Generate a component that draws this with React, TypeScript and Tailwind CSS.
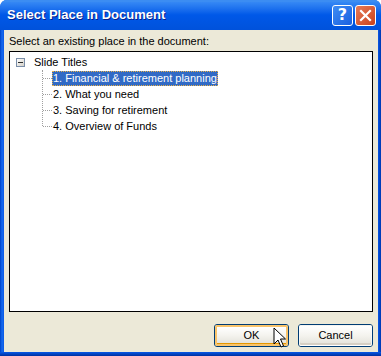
import React from "react";

const tahoma = { fontFamily: '"Liberation Sans", Arial, sans-serif' };

function TreeRow({ label, selected }: { label: string; selected?: boolean }) {
  return (
    <div className="flex h-[16px] items-center">
      <div className="w-[9px] h-0 border-t border-dotted border-[#a0a0a0]" />
      <div
        className={
          selected
            ? "h-[15px] flex items-center px-[1px] bg-[#316ac5] text-white outline-1 outline-dotted outline-[#e8b048] -outline-offset-1"
            : "h-[15px] flex items-center px-[1px] text-black"
        }
      >
        {label}
      </div>
    </div>
  );
}

function XPButton({ label, hot }: { label: string; hot?: boolean }) {
  return (
    <div className="w-[75px] h-[23px] rounded-[3px] border border-[#003c74] p-0">
      <div
        className={
          "w-full h-full rounded-[2px] flex items-center justify-center text-[11px] text-black bg-gradient-to-b from-[#ffffff] via-[#f4f3ee] to-[#e3e2da] " +
          (hot
            ? "border-[2px] border-[#f9c46b] shadow-[inset_0_-1px_0_#e59700]"
            : "border border-[#ffffff]/60 shadow-[inset_0_-2px_0_#d6d0c5]")
        }
        style={tahoma}
      >
        {label}
      </div>
    </div>
  );
}

export default function App() {
  return (
    <div className="w-[381px] h-[356px] relative overflow-hidden bg-white">
      <div className="w-full h-full flex flex-col rounded-t-[7px] bg-[#0055e5] overflow-hidden">
        {/* Title bar */}
        <div className="h-[30px] flex items-center pl-[7px] pr-[5px] bg-gradient-to-b from-[#3d8ff6] via-[#0058e8] to-[#0052db] shrink-0 relative">
          <div className="absolute left-0 right-0 top-0 h-[2px] bg-[#3c8df2]" />
          <div
            className="flex-1 text-white font-bold text-[13px] [text-shadow:1px_1px_0_#0a1f8a]"
            style={{ fontFamily: '"Liberation Sans", "Trebuchet MS", sans-serif' }}
          >
            Select Place in Document
          </div>
          <div className="flex gap-[2px] items-center">
            <div className="w-[21px] h-[21px] rounded-[3px] border border-white bg-gradient-to-br from-[#3f8cf3] to-[#1a5fe0] flex items-center justify-center">
              <span className="text-white font-bold text-[16px] leading-none" style={{ fontFamily: '"DejaVu Sans", sans-serif' }}>?</span>
            </div>
            <div className="w-[21px] h-[21px] rounded-[3px] border border-white bg-gradient-to-br from-[#e77a56] to-[#c8401a] flex items-center justify-center">
              <svg width="13" height="13" viewBox="0 0 13 13">
                <path d="M2 2 L11 11 M11 2 L2 11" stroke="white" strokeWidth="2.2" strokeLinecap="square" />
              </svg>
            </div>
          </div>
        </div>
        {/* Body */}
        <div className="flex-1 flex bg-[#0055e5]">
          <div className="w-[4px] bg-gradient-to-r from-[#0040c8] via-[#166aee] to-[#0a58e6]" />
          <div className="flex-1 flex flex-col bg-[#ece9d8] pl-[5px] pr-[5px]" style={tahoma}>
            <div className="h-[21px] flex items-center text-[11px] text-black pt-[2px]">
              Select an existing place in the document:
            </div>
            <div className="h-[261px] border border-black bg-white text-[11px] pt-[2px]">
              <div className="flex h-[16px] items-center">
                <div className="w-[6px]" />
                <div className="w-[9px] h-[9px] border border-[#7a8ea8] bg-gradient-to-br from-white to-[#d4d0c8] flex items-center justify-center">
                  <div className="w-[5px] h-[1px] bg-[#2b2b2b]" />
                </div>
                <div className="w-[8px]" />
                <div className="text-black px-[1px]">Slide Titles</div>
              </div>
              <div className="ml-[32px] border-l border-dotted border-[#a0a0a0] w-fit h-[56px] overflow-visible">
                <TreeRow label="1. Financial & retirement planning" selected />
                <TreeRow label="2. What you need" />
                <TreeRow label="3. Saving for retirement" />
                <TreeRow label="4. Overview of Funds" />
              </div>
            </div>
            <div className="flex justify-end gap-[9px] mt-[12px]">
              <XPButton label="OK" hot />
              <XPButton label="Cancel" />
            </div>
          </div>
          <div className="w-[3px] bg-gradient-to-r from-[#0a58e6] to-[#0036b0]" />
        </div>
        <div className="h-[4px] bg-gradient-to-b from-[#0a58e6] to-[#0030a0] shrink-0" />
      </div>
      {/* cursor */}
      <svg className="absolute left-[273px] top-[327px]" width="14" height="22" viewBox="0 0 14 22">
        <path d="M1 1 L1 17 L5 13 L8 20 L10.5 19 L7.5 12 L12.5 12 Z" fill="white" stroke="black" strokeWidth="1" strokeLinejoin="miter" />
      </svg>
    </div>
  );
}
